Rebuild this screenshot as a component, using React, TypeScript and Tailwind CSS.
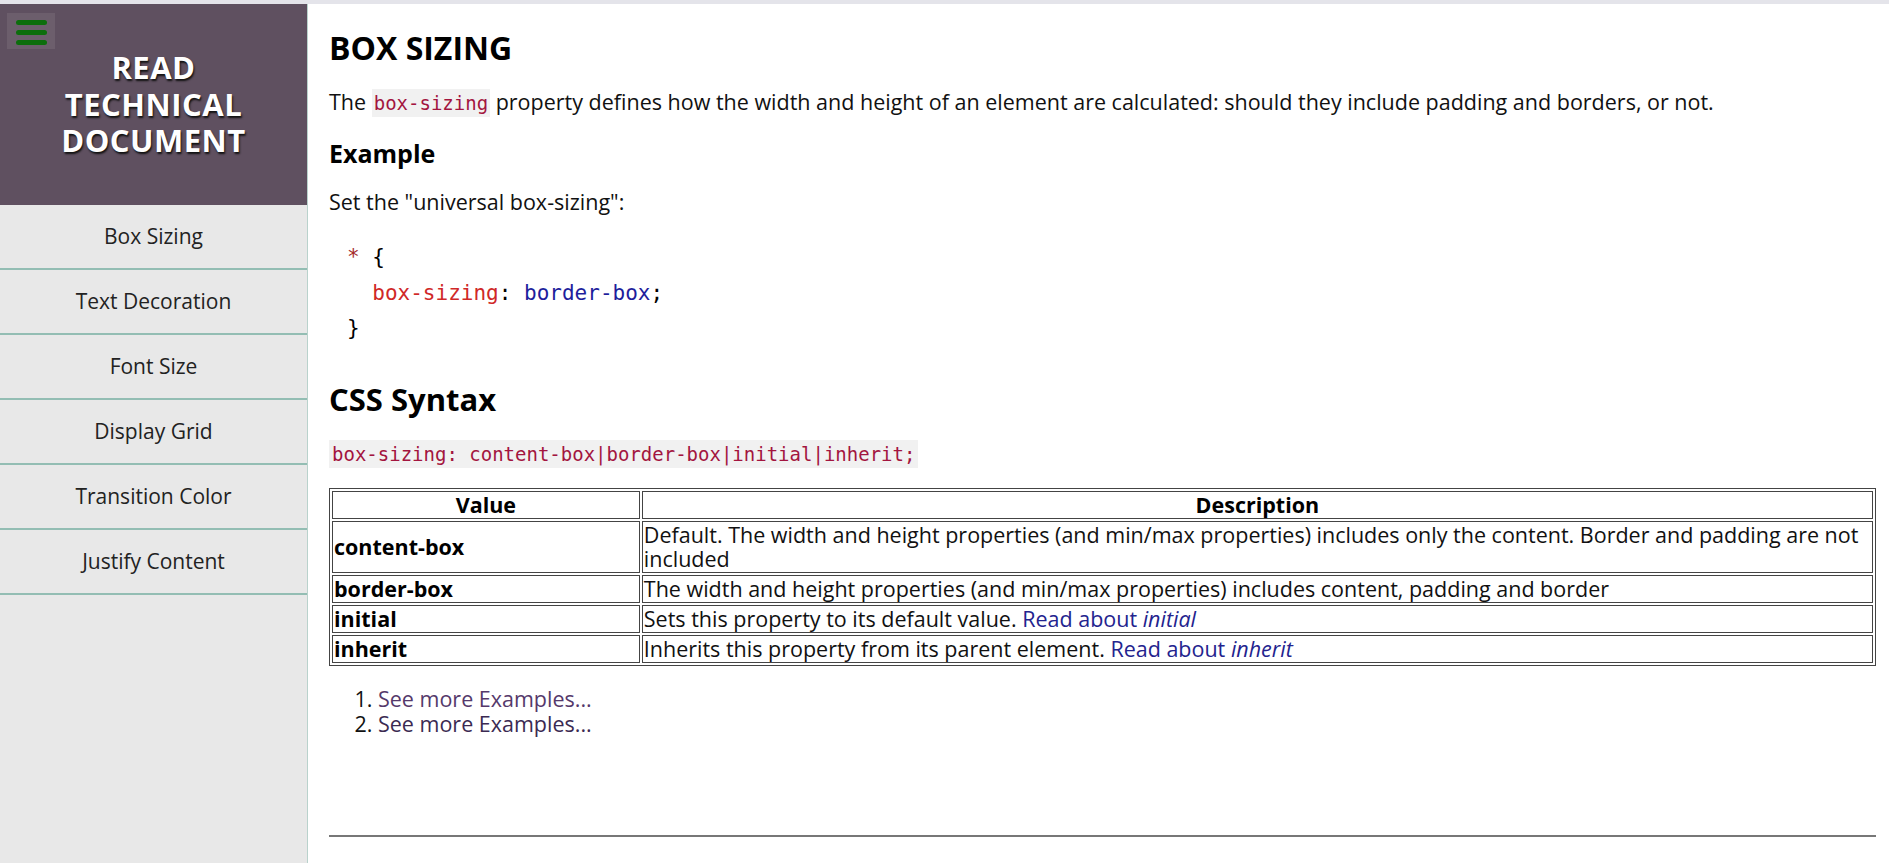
import React from 'react';

const navItems = ['Box Sizing', 'Text Decoration', 'Font Size', 'Display Grid', 'Transition Color', 'Justify Content'];

const rows = [
   { value: 'content-box', desc: 'Default. The width and height properties (and min/max properties) includes only the content. Border and padding are not included' },
   { value: 'border-box', desc: 'The width and height properties (and min/max properties) includes content, padding and border' },
   { value: 'initial', desc: 'Sets this property to its default value.', link: 'initial' },
   { value: 'inherit', desc: 'Inherits this property from its parent element.', link: 'inherit' },
];

const Sidebar = () => {
   return (
      <nav className="w-[308px] shrink-0 bg-[#e8e8e8] border-r border-[#b9d2cc]">
         <header className="relative h-[201px] bg-[#5f5060] pt-[45px] text-center">
            <button className="absolute left-[7px] top-[9px] w-[48px] h-[36px] bg-[#6c5e6c] flex flex-col items-center pt-[7px] gap-[5px]">
               <span className="block w-[31px] h-[5px] rounded-full bg-[#0c6e0c]"></span>
               <span className="block w-[31px] h-[5px] rounded-full bg-[#0c6e0c]"></span>
               <span className="block w-[31px] h-[5px] rounded-full bg-[#0c6e0c]"></span>
            </button>
            <h1 className="text-white font-bold text-[31px] leading-[36.5px] tracking-[0.5px] [text-shadow:1px_2px_2px_#111]">
               READ<br />TECHNICAL<br />DOCUMENT
            </h1>
         </header>
         <ul>
            {navItems.map((item, index) => (
               <li key={index} className="h-[65px] border-b-2 border-[#93bdb3] flex items-center justify-center text-[21px] text-[#222]">
                  {item}
               </li>
            ))}
         </ul>
      </nav>
   );
};

const App = () => {
   return (
      <div className="min-h-screen flex border-t-4 border-[#e4e4ea] bg-white text-[#111] font-['Open_Sans',sans-serif]">
         <Sidebar />
         <main className="flex-1 pl-[21px] pr-[13px] pt-[25px]">
            <h1 className="text-[32px] leading-[38px] font-bold text-black">BOX SIZING</h1>
            <p className="mt-[20px] text-[21.5px] leading-[30px]">
               The <code className="inline-block h-[28px] leading-[28px] px-[2px] bg-[#f1f1f1] text-[#a3153f] text-[19px] font-['DejaVu_Sans_Mono',monospace]">box-sizing</code> property defines how the width and height of an element are calculated: should they include padding and borders, or not.
            </p>
            <h3 className="mt-[21px] text-[25px] leading-[30px] font-bold text-black">Example</h3>
            <p className="mt-[19px] text-[21.5px] leading-[30px]">Set the "universal box-sizing":</p>
            <pre className="mt-[23px] pl-[18px] text-[21px] leading-[35.5px] font-['DejaVu_Sans_Mono',monospace] text-black">
               <span className="text-[#a52a2a]">*</span> {'{'}{'\n'}
               {'  '}<span className="text-[#d02828]">box-sizing</span>: <span className="text-[#1e1e9c]">border-box</span>;{'\n'}
               {'}'}
            </pre>
            <h2 className="mt-[33px] text-[31px] leading-[38px] font-bold text-black">CSS Syntax</h2>
            <div className="mt-[22px]">
               <code className="inline-block h-[28px] leading-[28px] px-[3px] bg-[#f1f1f1] text-[#a3153f] text-[19px] font-['DejaVu_Sans_Mono',monospace]">box-sizing: content-box|border-box|initial|inherit;</code>
            </div>
            <table className="mt-[20px] w-full border-separate border-spacing-[2px] border border-[#444] text-[21.5px] leading-[24px]">
               <thead>
                  <tr>
                     <th className="w-[20%] border border-[#444] p-[1px] font-bold text-black">Value</th>
                     <th className="border border-[#444] p-[1px] font-bold text-black">Description</th>
                  </tr>
               </thead>
               <tbody>
                  {rows.map((row, index) => (
                     <tr key={index}>
                        <td className="border border-[#444] p-[1px] font-bold text-black">{row.value}</td>
                        <td className="border border-[#444] p-[1px]">
                           {row.desc}
                           {row.link && (
                              <> <a className="text-[#23238e]">Read about <i>{row.link}</i></a></>
                           )}
                        </td>
                     </tr>
                  ))}
               </tbody>
            </table>
            <ol className="mt-[20px] pl-[49px] list-decimal text-[21.5px] leading-[25px]">
               <li><a className="text-[#55396b]">See more Examples...</a></li>
               <li><a className="text-[#3b2a52]">See more Examples...</a></li>
            </ol>
            <hr className="mt-[99px] border-t-2 border-[#777]" />
         </main>
      </div>
   );
};

export default App;
